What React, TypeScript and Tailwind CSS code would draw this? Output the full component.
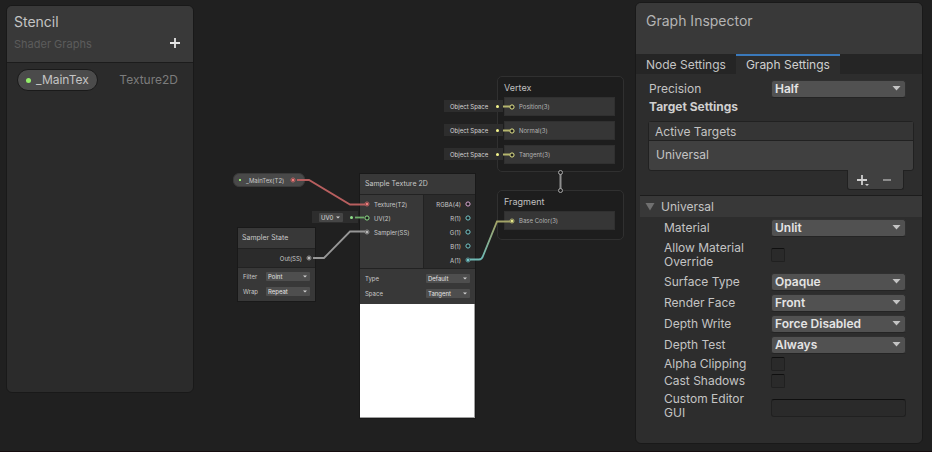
import React, { useId, useState } from "react";

const OPTIONS: Record<string, string[]> = {
  Half: ["Half", "Single"],
  Unlit: ["Unlit", "Lit"],
  Opaque: ["Opaque", "Transparent"],
  Front: ["Front", "Back", "Both"],
  "Force Disabled": ["Force Disabled", "Force Enabled", "Auto"],
  Always: ["Always", "Never", "Less", "Equal"],
  Point: ["Point", "Linear", "Trilinear"],
  Repeat: ["Repeat", "Clamp", "Mirror"],
  Default: ["Default", "Normal"],
  Tangent: ["Tangent", "Object"],
  UV0: ["UV0", "UV1", "UV2", "UV3"],
};

function Options({ value }: { value: string }) {
  return (
    <>
      {OPTIONS[value].map((o) => (
        <option key={o}>{o}</option>
      ))}
    </>
  );
}

/* ---------- inspector controls ---------- */

function Dropdown({ id, value }: { id: string; value: string }) {
  return (
    <div className="grid flex-1 items-center">
      <select
        id={id}
        defaultValue={value}
        className="col-start-1 row-start-1 h-[18px] w-full appearance-none rounded-[3px] border border-[#303030] border-b-[#242424] bg-[#515151] pl-[3px] text-[12px] leading-4 font-semibold text-[#e4e4e4]"
      >
        <Options value={value} />
      </select>
      <svg className="pointer-events-none col-start-1 row-start-1 mr-[5px] justify-self-end" width="9" height="5" viewBox="0 0 9 5">
        <path d="M0.5 0H8.5L4.5 4.5Z" fill="#c4c4c4" />
      </svg>
    </div>
  );
}

function SelectRow({ label, value, wide = false }: { label: string; value: string; wide?: boolean }) {
  const id = useId();
  return (
    <div className="flex h-[21px] items-center">
      <label htmlFor={id} className={wide ? "w-[122px] shrink-0" : "w-[107px] shrink-0"}>
        {label}
      </label>
      <Dropdown id={id} value={value} />
    </div>
  );
}

function CheckRow({ label, tall = false }: { label: string; tall?: boolean }) {
  const id = useId();
  return (
    <div className={tall ? "flex h-[33px] items-center" : "flex h-[17px] items-center"}>
      <label htmlFor={id} className="w-[107px] shrink-0 pr-4 leading-[14px]">
        {label}
      </label>
      <input
        id={id}
        type="checkbox"
        className="size-[14px] appearance-none rounded-[2px] border border-[#202020] border-t-[#0f0f0f] bg-[#2a2a2a] checked:bg-[#6a6a6a]"
      />
    </div>
  );
}

function Inspector() {
  const [tab, setTab] = useState("Graph Settings");
  const gui = useId();
  return (
    <aside className="mt-[2px] mr-[9px] flex w-[288px] shrink-0 flex-col self-start overflow-hidden rounded-md border border-[#191919] bg-[#2d2d2d] pb-[23px] text-[12px] leading-4 text-[#c4c4c4]">
      <header className="h-[51px] bg-[#393939] px-[10px] pt-2">
        <h2 className="text-[14px] leading-5 text-[#b4b4b4]">Graph Inspector</h2>
      </header>
      <div role="tablist" className="flex h-5 bg-[#252525]">
        {["Node Settings", "Graph Settings"].map((t) => (
          <button
            key={t}
            role="tab"
            aria-selected={tab === t}
            onClick={() => setTab(t)}
            className={
              tab === t
                ? "border-t-2 border-[#3a79bb] bg-[#2d2d2d] px-[10px] text-[#d0d0d0]"
                : "border-t-2 border-transparent px-[10px] text-[#c4c4c4]"
            }
          >
            {t}
          </button>
        ))}
      </div>

      <div className="pt-1 pr-4 pl-[13px]">
        <SelectRow label="Precision" value="Half" wide />
        <h3 className="font-bold text-[#cfcfcf]">Target Settings</h3>
      </div>

      <section className="mt-1.5 mr-2 ml-3">
        <div className="rounded-[3px] border border-[#212121] bg-[#404040]">
          <h4 className="h-[19px] border-b border-[#212121] bg-[#353535] pl-1.5 leading-[19px]">Active Targets</h4>
          <div className="h-[29px] pl-[7px] leading-7">Universal</div>
        </div>
        <div className="mr-[10px] -mt-px ml-auto flex h-5 w-[57px] items-center justify-around rounded-b-[3px] border border-t-0 border-[#212121] bg-[#404040]">
          <button aria-label="Add target">
            <svg width="14" height="14" viewBox="0 0 14 14">
              <path d="M7 2V12M2 7H12" stroke="#d0d0d0" strokeWidth="1.8" />
              <path d="M10 11H14L12 13Z" fill="#d0d0d0" />
            </svg>
          </button>
          <button aria-label="Remove target">
            <svg width="14" height="14" viewBox="0 0 14 14">
              <path d="M1 7H9" stroke="#8c8c8c" strokeWidth="1.8" />
            </svg>
          </button>
        </div>
      </section>

      <h3 className="mt-[5px] ml-1 border-t border-[#1c1c1c] bg-[#383838]">
        <button aria-expanded="true" className="flex h-[21px] items-center gap-1.5 pl-[5px]">
          <svg width="10" height="8" viewBox="0 0 10 8">
            <path d="M0.5 0H9.5L5 7.5Z" fill="#707070" />
          </svg>
          Universal
        </button>
      </h3>

      <div className="pr-4 pl-7">
        <SelectRow label="Material" value="Unlit" />
        <CheckRow label="Allow Material Override" tall />
        <SelectRow label="Surface Type" value="Opaque" />
        <SelectRow label="Render Face" value="Front" />
        <SelectRow label="Depth Write" value="Force Disabled" />
        <SelectRow label="Depth Test" value="Always" />
        <CheckRow label="Alpha Clipping" />
        <CheckRow label="Cast Shadows" />
        <div className="flex items-start pt-[3px]">
          <label htmlFor={gui} className="w-[107px] shrink-0 pr-4 leading-[14px]">
            Custom Editor GUI
          </label>
          <input
            id={gui}
            type="text"
            className="mt-[7px] h-[18px] min-w-0 flex-1 rounded-[3px] border border-[#202020] border-t-[#0f0f0f] bg-[#2a2a2a] px-1"
          />
        </div>
      </div>
    </aside>
  );
}

/* ---------- blackboard ---------- */

function Blackboard() {
  return (
    <aside className="mt-[5px] mb-[58px] ml-[6px] w-[188px] shrink-0 overflow-hidden rounded-md border border-[#191919] bg-[#2b2b2b]">
      <header className="h-[57px] border-b border-[#1c1c1c] bg-[#393939] pt-1.5 pr-3 pl-[7px]">
        <h2 className="text-[14px] leading-5 text-[#c4c4c4]">Stencil</h2>
        <div className="flex items-center justify-between">
          <span className="text-[11px] leading-6 text-[#5c5c5c]">Shader Graphs</span>
          <button aria-label="Add property">
            <svg width="12" height="12" viewBox="0 0 12 12">
              <path d="M6 0V10M1 5H11" stroke="#e6e6e6" strokeWidth="1.8" />
            </svg>
          </button>
        </div>
      </header>
      <div className="flex items-center justify-between pt-1.5 pr-[15px] pl-[10px] text-[12px] leading-4">
        <button className="flex h-[22px] items-center gap-[5px] rounded-full border border-[#1a1a1a] bg-[#4b4b4b] px-2 text-[#c4c4c4]">
          <span className="size-[5px] rounded-full bg-[#93ee6a]" />
          _MainTex
        </button>
        <span className="text-[#7c7c7c]">Texture2D</span>
      </div>
    </aside>
  );
}

/* ---------- graph canvas ---------- */

function Port({ color, filled = false }: { color: string; filled?: boolean }) {
  return (
    <svg className="shrink-0" width="6" height="6" viewBox="0 0 6 6">
      <circle cx="3" cy="3" r="2.1" fill="#1e1e1e" stroke={color} strokeWidth="1" strokeOpacity={filled ? 0.6 : 1} />
      {filled && <circle cx="3" cy="3" r="1.5" fill={color} />}
    </svg>
  );
}

function Caret() {
  return (
    <svg className="pointer-events-none col-start-1 row-start-1 mr-[3px] justify-self-end" width="4" height="3" viewBox="0 0 4 3">
      <path d="M0 0.5H4L2 2.5Z" fill="#d0d0d0" />
    </svg>
  );
}

function NodeSelect({ label, value }: { label: string; value: string }) {
  const id = useId();
  return (
    <div className="flex h-[15px] items-center justify-between pr-[5px] pl-[5px]">
      <label htmlFor={id}>{label}</label>
      <div className="grid w-11 items-center">
        <select
          id={id}
          defaultValue={value}
          className="col-start-1 row-start-1 h-[9px] w-full appearance-none rounded-[1px] bg-[#4e4e4e] pl-[2px] text-[6px] leading-[9px] text-[#e4e4e4]"
        >
          <Options value={value} />
        </select>
        <Caret />
      </div>
    </div>
  );
}

function SpaceTag({ className }: { className: string }) {
  return (
    <div className={`absolute flex h-3 w-[59px] items-center justify-between bg-[#2d2d2d] pr-1 pl-1.5 text-[#d4d4d4] ${className}`}>
      Object Space
      <span className="size-[3px] rounded-full bg-[#f4f58c]" />
    </div>
  );
}

function Block({ label, filled = false }: { label: string; filled?: boolean }) {
  return (
    <div className="flex h-[19px] items-center gap-1 border border-[#303030] bg-[#363636] pl-1 text-[#b4b4b4]">
      <Port color="#e4e68a" filled={filled} />
      {label}
    </div>
  );
}

const INPUTS = [
  { label: "Texture(T2)", color: "#ee7c7c", filled: true },
  { label: "UV(2)", color: "#8fe08a", filled: false },
  { label: "Sampler(SS)", color: "#b8b8b8", filled: true },
];
const OUTPUTS = [
  { label: "RGBA(4)", color: "#d9a8d2", filled: false },
  { label: "R(1)", color: "#74c7c9", filled: false },
  { label: "G(1)", color: "#74c7c9", filled: false },
  { label: "B(1)", color: "#74c7c9", filled: false },
  { label: "A(1)", color: "#74c7c9", filled: true },
];

function Canvas() {
  return (
    <main className="relative min-w-[430px] flex-1 text-[6px] leading-[9px] text-[#c8c8c8]">
      <section className="absolute top-[76px] left-[303px] w-[127px] rounded-[5px] border border-[#303030] bg-[#1d1d1d] pt-[5px] pr-2 pb-[7px] pl-1.5">
        <h3 className="mb-[3px] text-[9px] leading-3 text-[#c0c0c0]">Vertex</h3>
        <div className="flex flex-col gap-[5px]">
          <Block label="Position(3)" />
          <Block label="Normal(3)" />
          <Block label="Tangent(3)" />
        </div>
      </section>
      <section className="absolute top-[190px] left-[303px] w-[127px] rounded-[5px] border border-[#303030] bg-[#1d1d1d] pt-[5px] pr-2 pb-[9px] pl-1.5">
        <h3 className="mb-[3px] text-[9px] leading-3 text-[#c0c0c0]">Fragment</h3>
        <Block label="Base Color(3)" filled />
      </section>
      <SpaceTag className="top-[100px] left-[250px]" />
      <SpaceTag className="top-[124px] left-[250px]" />
      <SpaceTag className="top-[148px] left-[250px]" />

      <div className="absolute top-[173px] left-[39px] flex h-[14px] w-[72px] items-center rounded-[6px] border border-[#3a3a3a] bg-[#494949] pr-2 pl-[5px]">
        <span className="mr-[5px] size-[2px] bg-[#93ee6a]" />
        <span className="flex-1">_MainTex(T2)</span>
        <Port color="#ee7c7c" filled />
      </div>

      <div className="absolute top-[211px] left-[118px] flex h-3 w-[46px] items-center justify-between bg-[#2d2d2d] pr-[5px] pl-[7px]">
        <div className="grid w-6 items-center">
          <select
            aria-label="UV channel"
            defaultValue="UV0"
            className="col-start-1 row-start-1 h-[9px] w-full appearance-none rounded-[1px] bg-[#464646] pl-[2px] text-[6px] leading-[9px] text-[#dedede]"
          >
            <Options value="UV0" />
          </select>
          <Caret />
        </div>
        <span className="size-[3px] rounded-full bg-[#8fe08a]" />
      </div>

      <section className="absolute top-[227px] left-[43px] w-[79px] border border-[#191919] bg-[#383838]">
        <h3 className="h-5 pl-1 text-[7px] leading-5">Sampler State</h3>
        <div className="flex h-5 items-center justify-end gap-1 border-y border-[#222222] bg-[#2b2b2b] pr-[3px]">
          Out(SS)
          <Port color="#b8b8b8" filled />
        </div>
        <div className="pt-[1px] pb-[2px]">
          <NodeSelect label="Filter" value="Point" />
          <NodeSelect label="Wrap" value="Repeat" />
        </div>
      </section>

      <section className="absolute top-[173px] left-[165px] w-[117px] border border-[#191919] bg-[#383838]">
        <h3 className="h-5 pl-[5px] text-[7px] leading-5">Sample Texture 2D</h3>
        <div className="grid grid-cols-[64px_1fr] border-y border-[#222222]">
          <div className="border-r border-[#222222] pt-[2px] pl-1">
            {INPUTS.map((p) => (
              <div key={p.label} className="flex h-[14px] items-center gap-1">
                <Port color={p.color} filled={p.filled} />
                {p.label}
              </div>
            ))}
          </div>
          <div className="bg-[#2b2b2b] pt-[2px] pr-1 pb-[1px]">
            {OUTPUTS.map((p) => (
              <div key={p.label} className="flex h-[14px] items-center justify-end gap-1">
                {p.label}
                <Port color={p.color} filled={p.filled} />
              </div>
            ))}
          </div>
        </div>
        <div className="pt-[2px] pb-[3px]">
          <NodeSelect label="Type" value="Default" />
          <NodeSelect label="Space" value="Tangent" />
        </div>
        <div className="h-[114px] border-r border-b border-[#a0a0a0] bg-white" />
      </section>

      <svg className="pointer-events-none absolute top-0 left-0" width="430" height="300" viewBox="0 0 430 300" fill="none">
        <defs>
          <linearGradient id="colorWire" x1="275" y1="260" x2="317" y2="222" gradientUnits="userSpaceOnUse">
            <stop offset="0.2" stopColor="#6fb9b4" />
            <stop offset="0.8" stopColor="#a3a468" />
          </linearGradient>
        </defs>
        <path d="M103 180H115L156 204.500H171" stroke="#b85f5f" strokeWidth="1.8" />
        <path d="M161 217.500H170" stroke="#6fae6b" strokeWidth="1.8" />
        <path d="M119 258H130L156 231.500H171" stroke="#969696" strokeWidth="1.8" />
        <path d="M276 259.500H285Q288 259.500 289 256L303 221.500H316" stroke="url(#colorWire)" strokeWidth="1.8" />
        <path d="M309 106.500H316M309 130.500H316M309 154.500H316" stroke="#b5b66e" strokeWidth="1.8" />
        <path d="M366.500 174V189" stroke="#8e8e8e" strokeWidth="2" />
        <circle cx="366.500" cy="172.500" r="2" fill="#1d1d1d" stroke="#a8a8a8" />
        <circle cx="366.500" cy="190.500" r="2" fill="#1d1d1d" stroke="#a8a8a8" />
      </svg>
    </main>
  );
}

export default function App() {
  return (
    <div className="flex min-h-screen border-b border-[#150c0f] bg-[#202020] font-['Inter','Liberation_Sans',sans-serif]">
      <Blackboard />
      <Canvas />
      <Inspector />
    </div>
  );
}
